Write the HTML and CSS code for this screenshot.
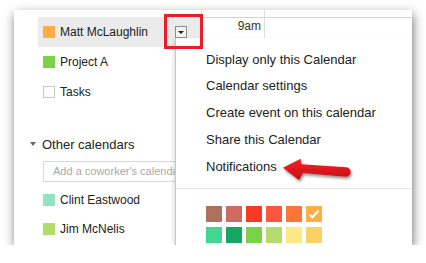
FILE: index.html
```html
<!DOCTYPE html>
<html lang="en">
<head>
    <meta charset="UTF-8">
    <meta name="viewport" content="width=device-width, initial-scale=1.0">
    <title>Calendar menu</title>
    <link rel="stylesheet" href="styles.css">
</head>
<body>

    <div class="shot">
        <div class="sidebar">
            <div class="cal-row selected">
                <span class="swatch orange"></span>
                <span class="cal-name">Matt McLaughlin</span>
                <span class="drop-btn"></span>
            </div>
            <div class="cal-row">
                <span class="swatch green"></span>
                <span class="cal-name">Project A</span>
            </div>
            <div class="cal-row">
                <span class="swatch empty"></span>
                <span class="cal-name">Tasks</span>
            </div>

            <div class="section-title"><span class="caret"></span>Other calendars</div>
            <div class="add-box">Add a coworker's calendar</div>

            <div class="cal-row other">
                <span class="swatch mint"></span>
                <span class="cal-name">Clint Eastwood</span>
            </div>
            <div class="cal-row other">
                <span class="swatch lime"></span>
                <span class="cal-name">Jim McNelis</span>
            </div>
        </div>

        <div class="cal-main">
            <div class="head-top"><div class="time-col"></div></div>
            <div class="head-row"><div class="time-col">9am</div></div>
        </div>

        <div class="menu">
            <div class="menu-item">Display only this Calendar</div>
            <div class="menu-item">Calendar settings</div>
            <div class="menu-item">Create event on this calendar</div>
            <div class="menu-item">Share this Calendar</div>
            <div class="menu-item">Notifications</div>
            <div class="menu-sep"></div>
            <div class="colors">
                <span style="background:#ac725e"></span>
                <span style="background:#d06b64"></span>
                <span style="background:#f83a22"></span>
                <span style="background:#fa573c"></span>
                <span style="background:#ff7537"></span>
                <span style="background:#ffad46">
                    <svg width="16" height="16" viewBox="0 0 16 16"><path d="M3.5 8.5 L6.5 11.2 L12.5 4.8" fill="none" stroke="#fff" stroke-width="2.2"/></svg>
                </span>
                <span style="background:#42d692"></span>
                <span style="background:#16a765"></span>
                <span style="background:#7bd148"></span>
                <span style="background:#b3dc6c"></span>
                <span style="background:#fbe983"></span>
                <span style="background:#fad165"></span>
            </div>
        </div>

        <div class="highlight"></div>

        <svg class="arrow" width="90" height="40" viewBox="0 0 90 40">
            <defs>
                <linearGradient id="red" x1="0" y1="0" x2="0" y2="1">
                    <stop offset="0" stop-color="#f5252b"/>
                    <stop offset="1" stop-color="#c40c12"/>
                </linearGradient>
                <filter id="drop" x="-20%" y="-30%" width="140%" height="180%">
                    <feDropShadow dx="1" dy="2" stdDeviation="1.5" flood-color="#000" flood-opacity="0.45"/>
                </filter>
            </defs>
            <path d="M4 13.7 L21.5 4.8 L22.5 10.3 L67 13.3 A4.7 4.7 0 0 1 67 22.7 L24 19 L20 26 Z" fill="url(#red)" filter="url(#drop)"/>
        </svg>
    </div>

</body>
</html>
```

FILE: styles.css
```css
body {
    margin: 0;
    background-color: #fff;
    font-family: "Liberation Sans", Arial, sans-serif;
    color: #222;
}

.shot {
    position: relative;
    display: flex;
    width: 398px;
    height: 235px;
    margin: 10px 0 0 14px;
    background-color: #fff;
    box-shadow: 1px 4px 10px rgba(0, 0, 0, 0.55);
    overflow: hidden;
}

/* left column */

.sidebar {
    width: 187px;
    flex-shrink: 0;
    padding-top: 7px;
}

.cal-row {
    display: flex;
    align-items: center;
    height: 30px;
    margin-left: 24px;
    padding-left: 5px;
    font-size: 12px;
}

.cal-row.selected {
    background-color: #ebebeb;
}

.cal-row.other {
    height: 29px;
}

.swatch {
    width: 12px;
    height: 12px;
    margin-right: 5px;
    box-sizing: border-box;
}

.orange { background-color: #ffad46; }
.green { background-color: #7bd148; }
.mint { background-color: #92e1c0; }
.lime { background-color: #b3dc6c; }

.empty {
    background-color: #fff;
    border: 1px solid #c8c8c8;
}

.cal-name {
    flex: 1;
}

.drop-btn {
    position: relative;
    width: 12px;
    height: 12px;
    margin-right: 14px;
    box-sizing: border-box;
    border: 1px solid #8c8c8c;
    background-color: #f2f2f2;
}

.drop-btn::after {
    content: "";
    position: absolute;
    left: 2px;
    top: 4px;
    border-left: 3px solid transparent;
    border-right: 3px solid transparent;
    border-top: 3px solid #222;
}

.section-title {
    display: flex;
    align-items: center;
    height: 20px;
    margin-top: 27px;
    padding-left: 16px;
    font-size: 13px;
}

.caret {
    width: 0;
    height: 0;
    margin-right: 6px;
    border-left: 3.5px solid transparent;
    border-right: 3.5px solid transparent;
    border-top: 4px solid #666;
}

.add-box {
    height: 21px;
    margin: 7px 0 3.5px 29px;
    padding-left: 9px;
    box-sizing: border-box;
    border: 1px solid #d9d9d9;
    font-size: 11px;
    line-height: 19px;
    color: #a8a8a8;
    white-space: nowrap;
}

/* calendar grid header */

.cal-main {
    flex: 1;
    border-left: 1px solid #ddd;
}

.head-top {
    height: 7px;
    display: flex;
}

.head-row {
    display: flex;
    height: 20px;
    border-top: 1px solid #d4d4d4;
    border-bottom: 1px solid #d4d4d4;
}

.time-col {
    width: 63px;
    border-right: 1px solid #ddd;
    padding-right: 3px;
    box-sizing: border-box;
    text-align: right;
    font-size: 12px;
    line-height: 16px;
    color: #333;
}

/* popup menu */

.menu {
    position: absolute;
    left: 161px;
    top: 28px;
    right: 0;
    bottom: 0;
    padding-top: 8.5px;
    background-color: #fff;
    border-left: 1px solid #c6c6c6;
    box-shadow: -1px 2px 4px rgba(0, 0, 0, 0.15);
}

.menu-item {
    height: 26.8px;
    padding-left: 30px;
    font-size: 13px;
    line-height: 26.8px;
    color: #222;
    white-space: nowrap;
}

.menu-sep {
    height: 1px;
    margin-top: 7.5px;
    background-color: #e5e5e5;
}

.colors {
    display: grid;
    grid-template-columns: repeat(6, 16px);
    gap: 5px 4px;
    margin: 17px 0 0 30px;
}

.colors span {
    display: block;
    width: 16px;
    height: 16px;
}

.colors svg {
    display: block;
}

/* annotations */

.highlight {
    position: absolute;
    left: 150px;
    top: 4px;
    width: 39px;
    height: 35px;
    box-sizing: border-box;
    border: 3px solid #ee1c24;
}

.arrow {
    position: absolute;
    left: 265px;
    top: 144px;
}
```
